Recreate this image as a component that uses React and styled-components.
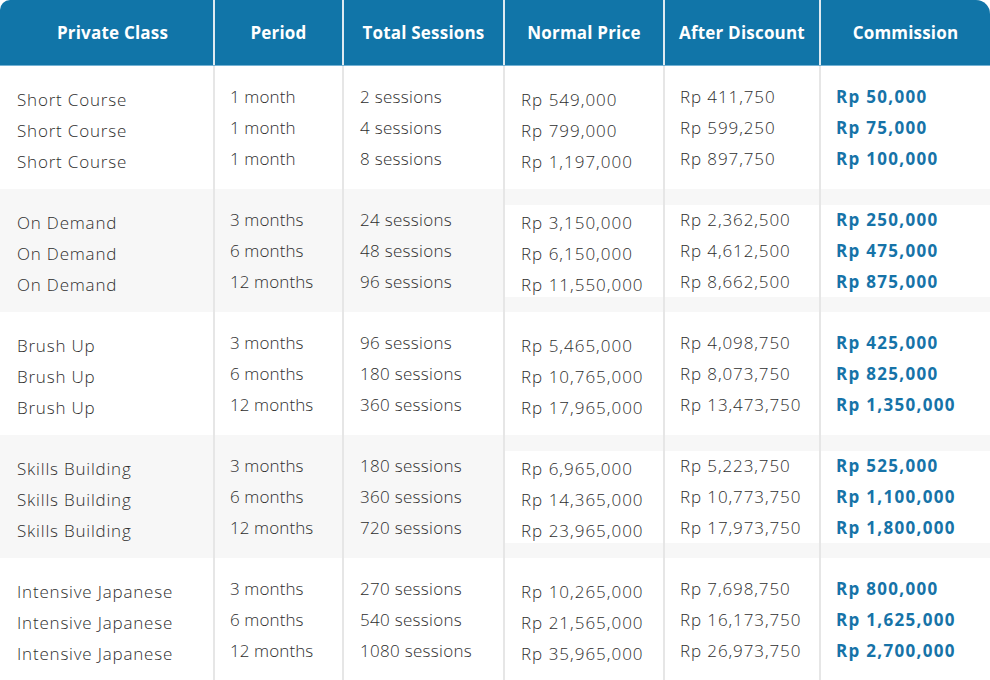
import styled, { createGlobalStyle } from "styled-components";

const GlobalStyle = createGlobalStyle`
  html, body {
    margin: 0;
    padding: 0;
    background: #fff;
  }
  body {
    font-family: "Open Sans", "Liberation Sans", sans-serif;
  }
`;

const COLS = "213px 129px 161px 160px 156px 171px";

const Table = styled.div`
  width: 990px;
  height: 680px;
  overflow: hidden;
`;

const Head = styled.div`
  display: grid;
  grid-template-columns: ${COLS};
  height: 65px;
  background: #1175a8;
  border-bottom: 1px solid #74b2d4;
  border-radius: 10px 14px 0 0;
  overflow: hidden;
`;

const HeadCell = styled.div`
  display: flex;
  align-items: center;
  justify-content: center;
  box-sizing: border-box;
  padding-left: ${(p) => (p.$first ? "12px" : "0")};
  border-left: ${(p) => (p.$first ? "none" : "2px solid #dfeaf1")};
  color: #fff;
  font-size: 17px;
  font-weight: 700;
  letter-spacing: 0.2px;
  white-space: nowrap;
`;

const Group = styled.div`
  display: grid;
  grid-template-columns: ${COLS};
  height: 123px;
  background: ${(p) => (p.$shade ? "#f7f7f7" : "#fff")};
`;

const Cell = styled.div`
  box-sizing: border-box;
  padding-top: 16px;
  border-left: ${(p) => (p.$first ? "none" : "2px solid #e6e6e6")};
`;

// price lists sit on a white strip, which shows on the grey groups
const Lines = styled.ul`
  list-style: none;
  margin: 0;
  box-sizing: border-box;
  height: 92px;
  padding: ${(p) => (p.$drop ? "3px" : "0")} 0 0 ${(p) => p.$indent}px;
  background: ${(p) => (p.$paper ? "#fff" : "transparent")};
`;

const Line = styled.li`
  height: 31px;
  line-height: 29px;
  font-size: 17px;
  letter-spacing: ${(p) => p.$spacing}px;
  white-space: nowrap;
  font-weight: ${(p) => (p.$strong ? 700 : 300)};
  color: ${(p) => (p.$strong ? "#1673a8" : "#2e2e2e")};
`;

const heads = [
  "Private Class",
  "Period",
  "Total Sessions",
  "Normal Price",
  "After Discount",
  "Commission",
];

const groups = [
  {
    name: "Short Course",
    period: ["1 month", "1 month", "1 month"],
    sessions: ["2 sessions", "4 sessions", "8 sessions"],
    normal: ["Rp 549,000", "Rp 799,000", "Rp 1,197,000"],
    after: ["Rp 411,750", "Rp 599,250", "Rp 897,750"],
    commission: ["Rp 50,000", "Rp 75,000", "Rp 100,000"],
  },
  {
    name: "On Demand",
    period: ["3 months", "6 months", "12 months"],
    sessions: ["24 sessions", "48 sessions", "96 sessions"],
    normal: ["Rp 3,150,000", "Rp 6,150,000", "Rp 11,550,000"],
    after: ["Rp 2,362,500", "Rp 4,612,500", "Rp 8,662,500"],
    commission: ["Rp 250,000", "Rp 475,000", "Rp 875,000"],
  },
  {
    name: "Brush Up",
    period: ["3 months", "6 months", "12 months"],
    sessions: ["96 sessions", "180 sessions", "360 sessions"],
    normal: ["Rp 5,465,000", "Rp 10,765,000", "Rp 17,965,000"],
    after: ["Rp 4,098,750", "Rp 8,073,750", "Rp 13,473,750"],
    commission: ["Rp 425,000", "Rp 825,000", "Rp 1,350,000"],
  },
  {
    name: "Skills Building",
    period: ["3 months", "6 months", "12 months"],
    sessions: ["180 sessions", "360 sessions", "720 sessions"],
    normal: ["Rp 6,965,000", "Rp 14,365,000", "Rp 23,965,000"],
    after: ["Rp 5,223,750", "Rp 10,773,750", "Rp 17,973,750"],
    commission: ["Rp 525,000", "Rp 1,100,000", "Rp 1,800,000"],
  },
  {
    name: "Intensive Japanese",
    period: ["3 months", "6 months", "12 months"],
    sessions: ["270 sessions", "540 sessions", "1080 sessions"],
    normal: ["Rp 10,265,000", "Rp 21,565,000", "Rp 35,965,000"],
    after: ["Rp 7,698,750", "Rp 16,173,750", "Rp 26,973,750"],
    commission: ["Rp 800,000", "Rp 1,625,000", "Rp 2,700,000"],
  },
];

const Column = ({ items, first, drop, paper, strong, spacing = 0.2, indent = 16 }) => (
  <Cell $first={first}>
    <Lines $drop={drop} $paper={paper} $indent={indent}>
      {items.map((t, i) => (
        <Line key={i} $strong={strong} $spacing={spacing}>
          {t}
        </Line>
      ))}
    </Lines>
  </Cell>
);

const App = () => {
  return (
    <Table>
      <GlobalStyle />
      <Head>
        {heads.map((h, i) => (
          <HeadCell key={h} $first={i === 0}>
            {h}
          </HeadCell>
        ))}
      </Head>
      {groups.map((g, i) => (
        <Group key={g.name} $shade={i % 2 === 1}>
          <Column
            items={[g.name, g.name, g.name]}
            first
            drop
            spacing={0.8}
            indent={17}
          />
          <Column items={g.period} spacing={0.1} indent={15} />
          <Column items={g.sessions} spacing={0.3} />
          <Column items={g.normal} drop paper spacing={1} />
          <Column items={g.after} paper spacing={0.9} indent={15} />
          <Column
            items={g.commission}
            paper
            strong
            spacing={1.3}
            indent={15}
          />
        </Group>
      ))}
    </Table>
  );
};

export default App;
